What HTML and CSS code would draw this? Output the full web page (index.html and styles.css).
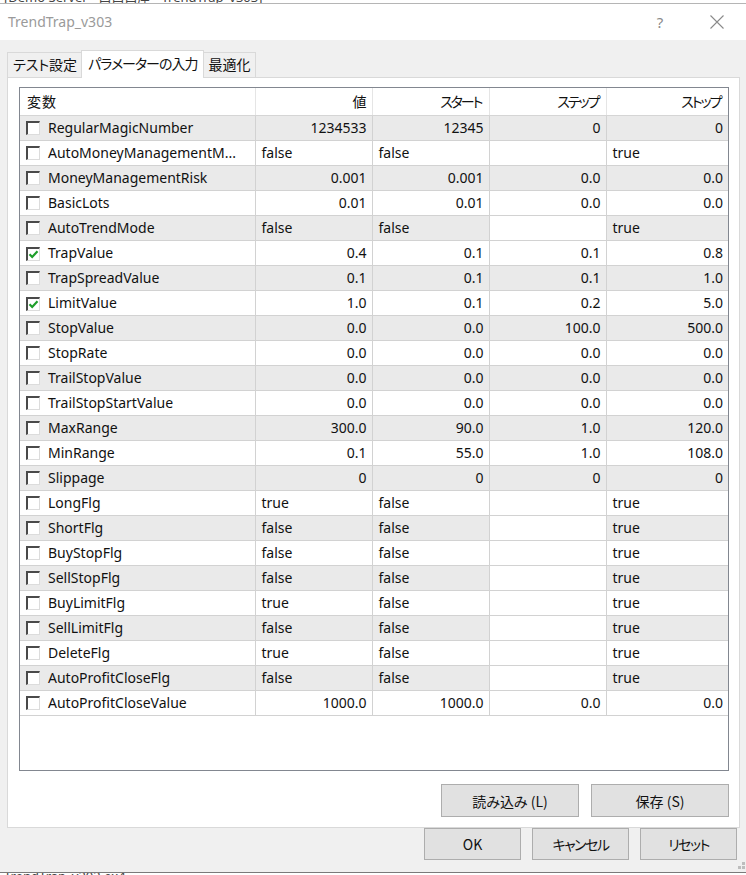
FILE: index.html
```html
<!DOCTYPE html>
<html lang="ja">
<head>
<meta charset="utf-8">
<title>TrendTrap_v303</title>
<link rel="stylesheet" href="styles.css">
</head>
<body>
<div class="bgstrip top"><span>[Demo Server - 口口口座 - TrendTrap_v303]</span></div>
<div class="titlebar">
  <span class="title">TrendTrap_v303</span>
  <span class="tbtn help">?</span>
  <span class="tbtn close"><svg width="16" height="16" viewBox="0 0 16 16"><path d="M1.5 1.5 L14.5 14.5 M14.5 1.5 L1.5 14.5" stroke="#8a8a8a" stroke-width="1.1" fill="none"/></svg></span>
</div>
<div class="dialog">
  <div class="tabs">
    <div class="tab">テスト設定</div>
    <div class="tab active">パラメーターの入力</div>
    <div class="tab">最適化</div>
  </div>
  <div class="panel">
    <div class="grid">
      <table>
        <colgroup><col class="c1"><col class="c2"><col class="c2"><col class="c2"><col class="c5"></colgroup>
        <thead>
          <tr><th class="l">変数</th><th>値</th><th class="kana">スタート</th><th class="kana">ステップ</th><th class="kana">ストップ</th></tr>
        </thead>
        <tbody id="rows"></tbody>
      </table>
    </div>
    <div class="btnrow">
      <button class="btn wide">読み込み (L)</button>
      <button class="btn wide">保存 (S)</button>
    </div>
  </div>
  <div class="btnrow bottom">
    <button class="btn">OK</button>
    <button class="btn kana">キャンセル</button>
    <button class="btn kana">リセット</button>
    <span class="grip"></span>
  </div>
</div>
<div class="bgstrip bot"><span>TrendTrap_v303.ex4</span></div>
<script src="app.js"></script>
</body>
</html>
```

FILE: app.js
```javascript
const data = [
  ["RegularMagicNumber", 0, "1234533", "12345", "0", "0"],
  ["AutoMoneyManagementM...", 0, "false", "false", null, "true"],
  ["MoneyManagementRisk", 0, "0.001", "0.001", "0.0", "0.0"],
  ["BasicLots", 0, "0.01", "0.01", "0.0", "0.0"],
  ["AutoTrendMode", 0, "false", "false", null, "true"],
  ["TrapValue", 1, "0.4", "0.1", "0.1", "0.8"],
  ["TrapSpreadValue", 0, "0.1", "0.1", "0.1", "1.0"],
  ["LimitValue", 1, "1.0", "0.1", "0.2", "5.0"],
  ["StopValue", 0, "0.0", "0.0", "100.0", "500.0"],
  ["StopRate", 0, "0.0", "0.0", "0.0", "0.0"],
  ["TrailStopValue", 0, "0.0", "0.0", "0.0", "0.0"],
  ["TrailStopStartValue", 0, "0.0", "0.0", "0.0", "0.0"],
  ["MaxRange", 0, "300.0", "90.0", "1.0", "120.0"],
  ["MinRange", 0, "0.1", "55.0", "1.0", "108.0"],
  ["Slippage", 0, "0", "0", "0", "0"],
  ["LongFlg", 0, "true", "false", null, "true"],
  ["ShortFlg", 0, "false", "false", null, "true"],
  ["BuyStopFlg", 0, "false", "false", null, "true"],
  ["SellStopFlg", 0, "false", "false", null, "true"],
  ["BuyLimitFlg", 0, "true", "false", null, "true"],
  ["SellLimitFlg", 0, "false", "false", null, "true"],
  ["DeleteFlg", 0, "true", "false", null, "true"],
  ["AutoProfitCloseFlg", 0, "false", "false", null, "true"],
  ["AutoProfitCloseValue", 0, "1000.0", "1000.0", "0.0", "0.0"]
];
const check = '<svg width="11" height="11" viewBox="0 0 11 11"><path d="M1.5 5.2 L4.2 8 L9.5 2.2" stroke="#1e9e2a" stroke-width="2.2" fill="none"/></svg>';
const tb = document.getElementById("rows");
data.forEach((r, i) => {
  const tr = document.createElement("tr");
  if (i % 2 === 0) tr.className = "alt";
  const isBool = r[4] === null;
  let h = '<td class="name"><span class="cb">' + (r[1] ? check : '') + '</span><span class="nm">' + r[0] + '</span></td>';
  for (let k = 2; k < 6; k++) {
    const v = r[k];
    if (v === null) h += '<td class="blank"></td>';
    else h += '<td class="' + (isBool ? 'l' : 'r') + '">' + v + '</td>';
  }
  tr.innerHTML = h;
  tb.appendChild(tr);
});
```

FILE: styles.css
```css
* { box-sizing: border-box; }
html, body { margin: 0; padding: 0; }
body {
  width: 746px;
  height: 875px;
  overflow: hidden;
  background: #f0f0f0;
  font-family: "Noto Sans", "Noto Sans CJK JP", sans-serif;
  font-size: 14px;
  color: #111;
}
.tab, th, .btn {
  font-family: "Noto Sans CJK JP", sans-serif;
  font-feature-settings: "palt";
}
.bgstrip {
  height: 3px;
  overflow: hidden;
  background: #fff;
  font-size: 13px;
  color: #444;
}
.bgstrip span { display: block; line-height: 14px; margin-top: -10px; padding-left: 4px; }
.bgstrip.top { border-bottom: 1px solid #b5b5b5; height: 4px; }
.bgstrip.bot { border-top: 1px solid #7a7a7a; height: 3px; }
.bgstrip.bot span { margin-top: -4px; }
.titlebar {
  height: 36px;
  background: #fff;
  display: flex;
  align-items: center;
}
.title {
  flex: 1;
  padding-left: 8px;
  color: #9a9a9a;
  font-size: 14px;
  padding-bottom: 2px;
}
.tbtn { width: 46px; display: flex; justify-content: center; align-items: center; color: #8a8a8a; }
.help { font-size: 15px; margin-right: 11px; }
.close { margin-right: 6px; }
.dialog {
  height: 832px;
  display: flex;
  flex-direction: column;
  padding: 10px 6px 0 7px;
}
.tabs { display: flex; align-items: flex-end; height: 27px; position: relative; z-index: 2; }
.tab {
  height: 25px;
  padding: 0 4px 0 5px;
  border: 1px solid #d9d9d9;
  border-bottom: none;
  background: #f0f0f0;
  font-size: 14px;
  line-height: 23px;
  color: #111;
}
.tab + .tab { margin-left: -1px; }
.tab.active {
  height: 28px;
  margin-bottom: -1px;
  background: #fff;
  padding: 0 5px 0 6px;
  line-height: 25px;
  letter-spacing: -1px;
}
.panel {
  height: 751px;
  width: 733px;
  background: #fff;
  border: 1px solid #d9d9d9;
  padding: 9px 10px 0 11px;
  display: flex;
  flex-direction: column;
}
.grid {
  height: 684px;
  width: 710px;
  border: 1px solid #828790;
  overflow: hidden;
}
table { border-collapse: collapse; table-layout: fixed; width: 708px; }
col.c1 { width: 235px; }
col.c2 { width: 117px; }
col.c5 { width: 122px; }
th {
  height: 27px;
  font-weight: normal;
  font-size: 14px;
  text-align: right;
  padding: 0 5px 0 6px;
  border-right: 1px solid #e5e5e5;
  border-bottom: 1px solid #d5d5d5;
  color: #111;
}
th.kana { letter-spacing: -2px; padding-right: 7px; }
th.l { text-align: left; padding-left: 7px; letter-spacing: 1px; }
td {
  height: 25px;
  padding: 0 5px 0 6px;
  border: 1px solid #d2d2d2;
  border-top: none;
  white-space: nowrap;
  overflow: hidden;
  line-height: 22px;
}
tr td:first-child { border-left: none; }
tr td:last-child { border-right: none; }
tr.alt td { background: #eaeaea; }
tr.alt td.blank { background: #fff; }
td.r { text-align: right; }
td.l { text-align: left; }
td.name { padding-left: 6px; }
.cb {
  display: inline-flex;
  align-items: center;
  justify-content: center;
  width: 14px;
  height: 14px;
  vertical-align: -2px;
  background: #fff;
  border-top: 2px solid #4a4a4a;
  border-left: 2px solid #4a4a4a;
  border-right: 1px solid #dcdcdc;
  border-bottom: 1px solid #dcdcdc;
}
.nm { margin-left: 8px; }
.btnrow {
  display: flex;
  justify-content: flex-end;
  gap: 12px;
  margin-top: 13px;
}
.btn {
  height: 33px;
  width: 138px;
  background: #e1e1e1;
  border: 1px solid #adadad;
  font-size: 14px;
  color: #111;
  padding: 0;
}
.btn.kana { letter-spacing: -1.5px; }
.btnrow.bottom {
  margin-top: 0;
  gap: 11px;
  padding-right: 3px;
  position: relative;
}
.btnrow.bottom .btn { width: 97px; height: 32px; }
.grip {
  position: absolute;
  right: -6px;
  bottom: -10px;
  width: 8px;
  height: 8px;
  background:
    linear-gradient(#bdbdbd, #bdbdbd) 0 4px / 3px 3px no-repeat,
    linear-gradient(#bdbdbd, #bdbdbd) 4px 4px / 3px 3px no-repeat,
    linear-gradient(#bdbdbd, #bdbdbd) 4px 0 / 3px 3px no-repeat;
}
```
